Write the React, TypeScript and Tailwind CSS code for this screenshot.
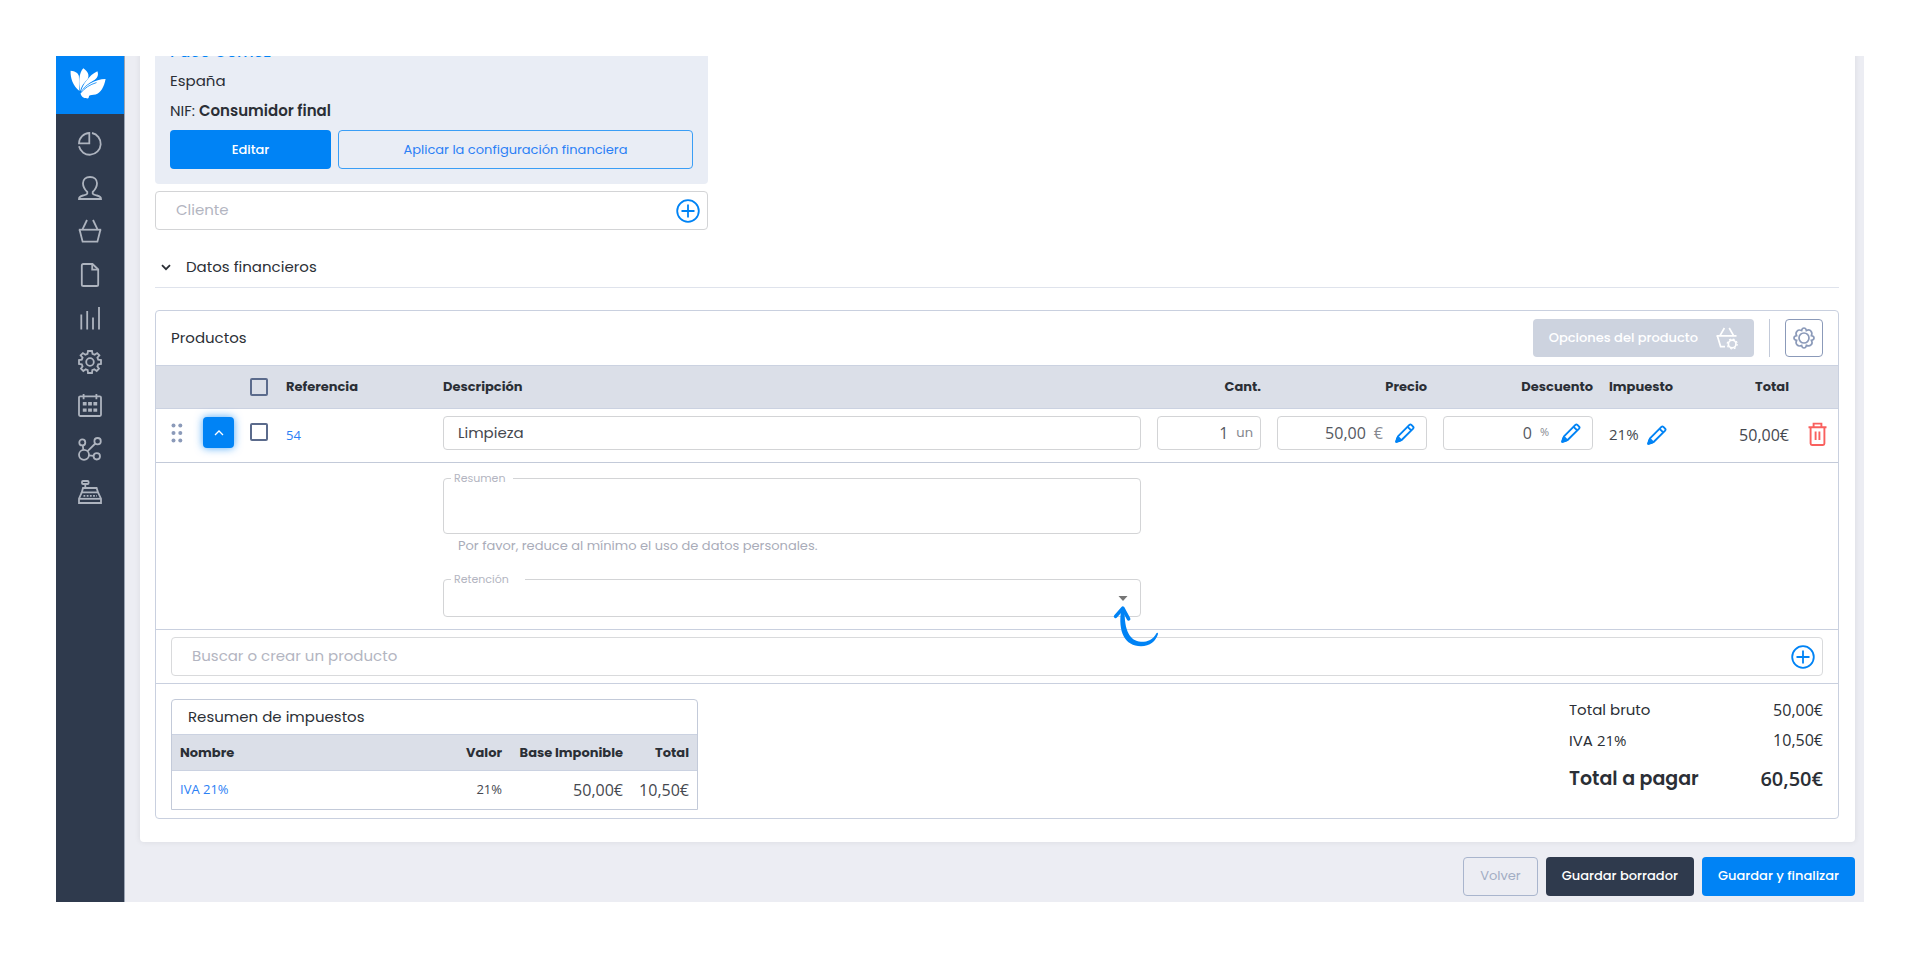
import { useState } from 'react';
import type { ReactNode } from 'react';
import clsx from 'clsx';

interface IconProps {
  className?: string;
}

interface NavItem {
  label: string;
  icon: ReactNode;
}

const navItems: NavItem[] = [
  {
    label: 'Panel',
    icon: (
      <>
        <path d="M11.3 1 V11.3 H1 A10.6 10.6 0 0 1 11.3 1 Z" />
        <path d="M14 1 A11 11 0 1 1 1 14.3" />
      </>
    ),
  },
  {
    label: 'Contactos',
    icon: (
      <path d="M9.3 16 C6.7 13.6 5 11 5 7.3 C5 3.4 7.8 1 12 1 C16.2 1 19 3.4 19 7.3 C19 11 17.3 13.6 14.7 16 C14.1 18.6 16 18.8 19 19.5 C22 20.2 23 21 23 23 H1 C1 21 2 20.2 5 19.5 C8 18.8 9.9 18.6 9.3 16 Z" />
    ),
  },
  {
    label: 'Ventas',
    icon: (
      <>
        <path d="M0.8 10.7 H23.2" />
        <path d="M1.6 10.7 L4.6 22.6 H19.4 L22.4 10.7" />
        <path d="M4.6 10.2 L9 1" />
        <path d="M19.4 10.2 L15 1" />
      </>
    ),
  },
  {
    label: 'Documentos',
    icon: (
      <>
        <path d="M14.5 1 H5.4 Q3.8 1 3.8 2.6 V21.4 Q3.8 23 5.4 23 H18.6 Q20.2 23 20.2 21.4 V6.5 Z" />
        <path d="M14.2 1.3 V6.6 H20" />
      </>
    ),
  },
  {
    label: 'Informes',
    icon: <path d="M3.3 8.5 V23.5 M9.2 5 V23.5 M15 11.5 V23.5 M21 1 V23.5" />,
  },
  {
    label: 'Ajustes',
    icon: (
      <>
        <circle cx="12" cy="12" r="3.8" />
        <path d="M10 1 H14 L14.5 3.9 L16.7 4.8 L19.1 3.1 L21.4 5.4 L19.4 7.7 L20.2 9.7 L23 10.1 V13.9 L20.2 14.3 L19.4 16.3 L21 18.7 L18.7 21 L16.3 19.2 L14.3 20.1 L14 23 H10 L9.7 20.1 L7.7 19.2 L5.3 21 L3 18.7 L4.6 16.3 L3.8 14.3 L1 13.9 V10.1 L3.8 9.7 L4.6 7.7 L2.6 5.4 L4.9 3.1 L7.3 4.8 L9.5 3.9 Z" />
      </>
    ),
  },
  {
    label: 'Calendario',
    icon: (
      <>
        <rect x="1" y="3.4" width="22" height="19.6" rx="1.2" />
        <path d="M5.6 1 V6.2 M18.4 1 V6.2" />
        <path
          d="M4.8 9 h3.8 v3.4 h-3.8 Z M10.1 9 h3.8 v3.4 h-3.8 Z M15.4 9 h3.8 v3.4 h-3.8 Z M4.8 15.4 h3.8 v3.4 h-3.8 Z M10.1 15.4 h3.8 v3.4 h-3.8 Z M15.4 15.4 h3.8 v3.4 h-3.8 Z"
          fill="currentColor"
          stroke="none"
        />
      </>
    ),
  },
  {
    label: 'Integraciones',
    icon: (
      <>
        <circle cx="6" cy="17.8" r="5" />
        <circle cx="4.3" cy="5.4" r="3" />
        <circle cx="19.6" cy="4.2" r="3.2" />
        <circle cx="18.8" cy="19.3" r="3.2" />
        <path d="M4.8 8.4 L5.3 12.8 M9.6 14.2 L17.3 6.5 M11 18.4 L15.6 18.9" />
      </>
    ),
  },
  {
    label: 'Caja',
    icon: (
      <>
        <rect x="4" y="1" width="6.6" height="3" rx="1" />
        <path d="M7.3 4 V8" />
        <path d="M5 8 H18.6 L20 12.4 H3.8 Z" />
        <path d="M3.8 12.4 L1 18.6 V23 H23 V18.6 L20 12.4" />
        <path d="M1 18.8 H23" />
        <path d="M5.5 15.8 H19" strokeDasharray="1.8 1.4" />
      </>
    ),
  },
];

const Logo = () => (
  <svg viewBox="0 0 36 31" className="h-[31px] w-9" fill="#fff" aria-hidden="true">
    <path d="M0.6 2.8 C5 3.2 8.2 5 8.9 8 C9.2 13 8.6 18 9.5 23 C3 18 0.2 10 0.6 2.8 Z" />
    <path d="M13.3 0.2 C18 3.2 19.4 7 17.9 10.6 C14.9 14.5 11.5 17.5 10.2 23 C8.5 14 8.7 5.4 13.3 0.2 Z" />
    <path d="M27.4 3.2 C29 7 27.2 10.4 23.6 12.6 C18.4 15.3 14 18.8 11 23.6 C12.4 17 19 7 27.4 3.2 Z" />
    <path d="M35.6 11 C34 19.4 30.8 24.6 25.6 26.5 C22.8 27.2 20.4 26.6 19.2 27.8 C18.6 28.8 19.2 29.8 18 30.4 C14 30.4 11 28.8 10.6 25.2 C14.5 17.2 25 11.2 35.6 11 Z" />
    <path d="M10.6 25 C15 19.6 20 16.6 26.5 14.6" stroke="#0083f5" strokeWidth="0.8" fill="none" />
  </svg>
);

const PlusIcon = () => (
  <svg viewBox="0 0 24 24" className="size-6" fill="none" stroke="#0083f5" strokeWidth="1.8" aria-hidden="true">
    <circle cx="12" cy="12" r="10.8" />
    <path d="M12 5.5 V18.5 M5.5 12 H18.5" />
  </svg>
);

const PencilIcon = ({ className }: IconProps) => (
  <svg
    viewBox="0 0 20 20"
    className={clsx('size-5', className)}
    fill="none"
    stroke="#0083f5"
    strokeWidth="1.9"
    strokeLinejoin="round"
    aria-hidden="true"
  >
    <path d="M1.2 18.8 L3 13.4 L14.4 1.9 Q15.4 1 16.4 1.9 L18.1 3.6 Q19 4.6 18.1 5.6 L6.6 17 Z" />
    <path d="M12.6 3.8 L16.2 7.4 M3.2 14.2 L5.8 16.8" />
    <path d="M1.2 18.8 L2.2 15.2 L4.8 17.8 Z" fill="#0083f5" />
  </svg>
);

const TrashIcon = () => (
  <svg viewBox="0 0 19 24" className="h-6 w-[19px]" fill="none" stroke="#f9605e" strokeWidth="1.9" aria-hidden="true">
    <path d="M0.5 5.2 H18.5 M5.6 5 V1.6 H13.4 V5" />
    <path d="M2.6 5.4 V21.6 Q2.6 23 4 23 H15 Q16.4 23 16.4 21.6 V5.4" />
    <path d="M7.6 9.5 V18 M11.4 9.5 V18" />
  </svg>
);

const BasketGearIcon = () => (
  <svg viewBox="0 0 22 23" className="h-[23px] w-[22px]" fill="none" stroke="#fff" strokeWidth="1.7" aria-hidden="true">
    <path d="M0.5 8.8 H20.5 M4 8.6 L8.4 1 M17.6 8.6 L13.2 1" />
    <path d="M1.4 9 L4.6 19.6 H9" />
    <circle cx="16.2" cy="17" r="3.8" />
    <circle cx="16.2" cy="17" r="5" strokeWidth="1.2" strokeDasharray="1.9 2.03" />
  </svg>
);

const GearIcon = () => (
  <svg viewBox="0 0 22 22" className="size-[22px]" fill="none" stroke="#8b9ab9" strokeWidth="1.7" aria-hidden="true">
    <circle cx="11" cy="11" r="5" />
    <path d="M11 1 Q12.8 1 13.4 3.6 Q16.4 1.9 17.9 4.1 Q19.6 5.8 18.4 8.6 Q21 9.2 21 11 Q21 12.8 18.4 13.4 Q20 16.2 18 17.9 Q16.2 19.6 13.4 18.4 Q12.8 21 11 21 Q9.2 21 8.6 18.4 Q5.8 19.8 4.1 17.9 Q2.3 16.2 3.6 13.4 Q1 12.8 1 11 Q1 9.2 3.6 8.6 Q2.2 5.8 4.1 4.1 Q5.8 2.2 8.6 3.6 Q9.2 1 11 1 Z" />
  </svg>
);

const DragIcon = () => (
  <svg viewBox="0 0 12 20" className="h-5 w-3" fill="#8b9ab9" aria-hidden="true">
    <circle cx="2.5" cy="2.4" r="2" />
    <circle cx="9.3" cy="2.4" r="2" />
    <circle cx="2.5" cy="10" r="2" />
    <circle cx="9.3" cy="10" r="2" />
    <circle cx="2.5" cy="17.6" r="2" />
    <circle cx="9.3" cy="17.6" r="2" />
  </svg>
);

// Curved pointer that calls attention to the withholding drop-down
const PointerArrow = () => (
  <svg
    viewBox="0 0 48 44"
    className="pointer-events-none absolute -right-[19px] top-[25px] z-10 h-11 w-12"
    aria-hidden="true"
  >
    <path d="M9.3 5 C5.5 28 13 42.2 29 42.2 C38 42.2 44 37 46 30 Q46 28 44.6 29 C41 36 35 38 29 37.8 C18 37 12 27 12.7 5 Z" fill="#0083f5" />
    <path d="M3.6 12.4 L10.8 4.2 L16.6 14.8" fill="none" stroke="#0083f5" strokeWidth="3.6" strokeLinecap="round" strokeLinejoin="round" />
  </svg>
);

const Sidebar = () => (
  <aside className="w-[69px] shrink-0 border-r border-[#9ba4b3] bg-[#2f3a4d]">
    <a href="#inicio" aria-label="Inicio" className="flex h-[58px] items-center justify-center bg-[#0083f5] pr-1 pb-1">
      <Logo />
    </a>
    <nav className="mt-[18px] flex h-[372px] flex-col items-center justify-between">
      {navItems.map((item) => (
        <a key={item.label} href="#menu" aria-label={item.label} className="text-[#aeb4bf]">
          <svg viewBox="0 0 24 24" className="size-6" fill="none" stroke="currentColor" strokeWidth="1.8" aria-hidden="true">
            {item.icon}
          </svg>
        </a>
      ))}
    </nav>
  </aside>
);

// The page is scrolled down, so the client name is only just visible
const ClientSection = () => (
  <div className="w-[553px]">
    <div className="-mt-[18px] rounded-b bg-[#e9edf5] px-[15px] pb-[15px]">
      <a href="#cliente" className="block text-base leading-7 font-medium text-[#0083f5]">
        Paco Gómez
      </a>
      <p className="leading-[30px]">España</p>
      <p className="leading-[30px]">
        NIF: <strong className="font-semibold">Consumidor final</strong>
      </p>
      <div className="mt-1 flex gap-[7px]">
        <button type="button" className="h-[39px] w-[161px] rounded bg-[#0083f5] text-[13px] font-medium text-white">
          Editar
        </button>
        <button type="button" className="h-[39px] flex-1 rounded border border-[#3a9ef6] text-[13px] text-[#2b80f5]">
          Aplicar la configuración financiera
        </button>
      </div>
    </div>
    <div className="mt-[7px] flex h-[39px] items-center rounded border border-[#d3d4d6] pr-[7px] pl-5">
      <input
        type="text"
        aria-label="Cliente"
        placeholder="Cliente"
        className="min-w-0 flex-1 outline-none placeholder:text-[#b3b5c1]"
      />
      <button type="button" aria-label="Añadir cliente">
        <PlusIcon />
      </button>
    </div>
  </div>
);

const inputBox = 'flex h-[34px] items-center rounded border border-[#d3d4d6] bg-white';
const numberFont = "font-['Open_Sans','Noto_Sans',sans-serif]";
const checkbox = 'block size-[18px] appearance-none rounded-xs border-2 border-[#5b6b8c]';

const ProductsTable = () => {
  const [isExpanded, setIsExpanded] = useState(true);

  return (
    <table className="w-full table-fixed text-left">
      <colgroup>
        <col className="w-[86px]" />
        <col className="w-9" />
        <col className="w-[157px]" />
        <col />
        <col className="w-[120px]" />
        <col className="w-[166px]" />
        <col className="w-[166px]" />
        <col className="w-[100px]" />
        <col className="w-24" />
        <col className="w-[41px]" />
      </colgroup>
      <thead>
        <tr className="h-[43px] border-y border-[#cbd2e1] bg-[#dbdfe8] text-[13px]">
          <td></td>
          <td className="px-2">
            <input type="checkbox" aria-label="Seleccionar todo" className={checkbox} />
          </td>
          <th className="px-2 font-bold">Referencia</th>
          <th className="px-2 font-bold">Descripción</th>
          <th className="px-2 text-right font-bold">Cant.</th>
          <th className="px-2 text-right font-bold">Precio</th>
          <th className="px-2 text-right font-bold">Descuento</th>
          <th className="px-2 font-bold">Impuesto</th>
          <th className="px-2 text-right font-bold">Total</th>
          <td></td>
        </tr>
      </thead>
      <tbody>
        <tr className="h-[54px]">
          <td className="pb-1.5">
            <div className="flex items-center justify-between pr-2 pl-[15px]">
              <DragIcon />
              <button
                type="button"
                aria-label="Mostrar detalle"
                aria-expanded={isExpanded}
                onClick={() => setIsExpanded(!isExpanded)}
                className="flex size-[31px] items-center justify-center rounded bg-[#0083f5] shadow-[0_0_8px_#0083f5]/70"
              >
                <svg viewBox="0 0 10 6" className="h-1.5 w-2.5" fill="none" stroke="#fff" strokeWidth="1.3" aria-hidden="true">
                  <path d="M1 5 L5 1 L9 5" />
                </svg>
              </button>
            </div>
          </td>
          <td className="px-2 pb-2">
            <input type="checkbox" aria-label="Seleccionar producto 54" className={checkbox} />
          </td>
          <td className={clsx('px-2 text-[13px] text-[#2b80f5]', numberFont)}>
            <a href="#producto">54</a>
          </td>
          <td className="px-2 pb-1.5">
            <input
              type="text"
              aria-label="Descripción"
              defaultValue="Limpieza"
              className="block h-[34px] w-full rounded border border-[#d3d4d6] px-3.5 text-[#45484f] outline-none"
            />
          </td>
          <td className="px-2 pb-1.5">
            <label className={clsx(inputBox, 'gap-2 pr-[7px]')}>
              <input
                type="text"
                aria-label="Cantidad"
                defaultValue="1"
                className={clsx('min-w-0 flex-1 text-right text-base text-[#55585f] outline-none', numberFont)}
              />
              <span className="text-[13px] text-[#85888f]">un</span>
            </label>
          </td>
          <td className="px-2 pb-1.5">
            <div className={clsx(inputBox, 'pr-[11px]')}>
              <input
                type="text"
                aria-label="Precio"
                defaultValue="50,00"
                className={clsx('min-w-0 flex-1 text-right text-base text-[#55585f] outline-none', numberFont)}
              />
              <span className={clsx('ml-2 text-base text-[#85888f]', numberFont)}>€</span>
              <button type="button" aria-label="Editar precio" className="ml-3">
                <PencilIcon />
              </button>
            </div>
          </td>
          <td className="px-2 pb-1.5">
            <div className={clsx(inputBox, 'pr-[11px]')}>
              <input
                type="text"
                aria-label="Descuento"
                defaultValue="0"
                className={clsx('min-w-0 flex-1 text-right text-base text-[#55585f] outline-none', numberFont)}
              />
              <span className={clsx('ml-2 text-[11px] text-[#85888f]', numberFont)}>%</span>
              <button type="button" aria-label="Editar descuento" className="ml-3">
                <PencilIcon />
              </button>
            </div>
          </td>
          <td className="px-2 pb-0.5">
            <div className="flex items-center gap-2">
              <span className={clsx('text-[15px] text-[#45484f]', numberFont)}>21%</span>
              <button type="button" aria-label="Editar impuesto">
                <PencilIcon />
              </button>
            </div>
          </td>
          <td className={clsx('px-2 pb-0.5 text-right text-base text-[#45484f]', numberFont)}>50,00€</td>
          <td className="pb-1 pl-[11px]">
            <button type="button" aria-label="Eliminar producto" className="block">
              <TrashIcon />
            </button>
          </td>
        </tr>
        {isExpanded && (
          <tr className="border-t border-[#c3cad9]">
            <td colSpan={3}></td>
            <td className="px-2 pt-[15px] pb-3">
              <div className="relative">
                <label htmlFor="resumen" className="absolute -top-2 left-2 bg-white pr-2 pl-[3px] text-[11px] leading-4 text-[#b3b5c1]">
                  Resumen
                </label>
                <textarea
                  id="resumen"
                  className="block h-14 w-full resize-none rounded border border-[#d3d4d6] px-3.5 py-2 outline-none"
                />
              </div>
              <p className="px-[15px] text-[13px] leading-6 text-[#a9acb9]">
                Por favor, reduce al mínimo el uso de datos personales.
              </p>
              <div className="relative mt-[21px]">
                <label htmlFor="retencion" className="absolute -top-2 left-2 bg-white pr-4 pl-[3px] text-[11px] leading-4 text-[#b3b5c1]">
                  Retención
                </label>
                <select
                  id="retencion"
                  defaultValue=""
                  className="block h-[38px] w-full appearance-none rounded border border-[#d3d4d6] bg-white px-3.5 outline-none"
                >
                  <option value=""></option>
                </select>
                <svg
                  viewBox="0 0 10 5"
                  className="pointer-events-none absolute top-[17px] right-[13px] h-[5px] w-2.5"
                  fill="#757575"
                  aria-hidden="true"
                >
                  <path d="M0.5 0 H9.5 L5 5 Z" />
                </svg>
                <PointerArrow />
              </div>
            </td>
            <td colSpan={6}></td>
          </tr>
        )}
      </tbody>
    </table>
  );
};

const TaxSummary = () => (
  <div className="w-[527px] rounded-t border border-[#c3cad9]">
    <h3 className="px-4 leading-[34px]">Resumen de impuestos</h3>
    <table className="w-full text-right">
      <thead>
        <tr className="h-9 border-y border-[#cbd2e1] bg-[#dbdfe8] text-[13px]">
          <th className="px-2 text-left font-bold">Nombre</th>
          <th className="w-[68px] px-2 font-bold">Valor</th>
          <th className="w-[121px] px-2 font-bold whitespace-nowrap">Base Imponible</th>
          <th className="w-[66px] px-2 font-bold">Total</th>
        </tr>
      </thead>
      <tbody>
        <tr className={clsx('h-[38px] text-base text-[#45484f]', numberFont)}>
          <td className="px-2 text-left text-[13px] text-[#2b80f5]">
            <a href="#iva">IVA 21%</a>
          </td>
          <td className="px-2 text-[13px]">21%</td>
          <td className="px-2">50,00€</td>
          <td className="px-2">10,50€</td>
        </tr>
      </tbody>
    </table>
  </div>
);

const Totals = () => (
  <dl className="-mt-1 grid w-[254px] grid-cols-[1fr_auto] content-start leading-[30px]">
    <dt>Total bruto</dt>
    <dd className={clsx('text-right text-base leading-[30px]', numberFont)}>50,00€</dd>
    <dt>
      IVA <span className={numberFont}>21%</span>
    </dt>
    <dd className={clsx('text-right text-base leading-[30px]', numberFont)}>10,50€</dd>
    <dt className="pt-2 text-[19px] leading-[30px] font-semibold">Total a pagar</dt>
    <dd className={clsx('pt-2 text-right text-xl leading-[30px] font-semibold', numberFont)}>60,50€</dd>
  </dl>
);

const ProductsSection = () => (
  <section className="mt-[22px] rounded border border-[#c9d0df]">
    <div className="flex h-[54px] items-center px-[15px]">
      <h2 className="flex-1">Productos</h2>
      <button
        type="button"
        disabled
        className="flex h-[38px] items-center gap-[18px] rounded bg-[#cdd3df] px-4 text-[13px] font-medium text-white"
      >
        Opciones del producto
        <BasketGearIcon />
      </button>
      <span className="mx-[15px] h-[38px] w-px bg-[#c3cad9]"></span>
      <button
        type="button"
        aria-label="Configurar columnas"
        className="flex size-[38px] items-center justify-center rounded border border-[#8b9ab9]"
      >
        <GearIcon />
      </button>
    </div>

    <ProductsTable />

    <div className="border-y border-[#c9d0df] px-[15px] py-[7px]">
      <div className="flex h-[39px] items-center rounded border border-[#d9dadc] pr-[7px] pl-5">
        <input
          type="text"
          aria-label="Buscar o crear un producto"
          placeholder="Buscar o crear un producto"
          className="min-w-0 flex-1 outline-none placeholder:text-[#b3b5c1]"
        />
        <button type="button" aria-label="Crear producto">
          <PlusIcon />
        </button>
      </div>
    </div>

    <div className="flex justify-between px-[15px] pt-[15px] pb-2">
      <TaxSummary />
      <Totals />
    </div>
  </section>
);

const App = () => {
  return (
    <div className="min-h-screen bg-white p-14 font-['Poppins','Inter',sans-serif] text-[15px] text-[#2b2f36]">
      <div className="flex overflow-hidden bg-[#ecedf3]">
        <Sidebar />
        <div className="min-w-0 flex-1 pr-[9px] pl-[15px]">
          <main className="rounded-b bg-white pr-4 pb-[23px] pl-[15px] shadow-[0_0_6px_#00000014]">
            <ClientSection />
            <button type="button" className="mt-[18px] flex h-10 w-full items-center gap-[15px] border-b border-[#dfe3ec] pl-1.5 text-left">
              <svg viewBox="0 0 10 7" className="h-[7px] w-2.5" fill="none" stroke="currentColor" strokeWidth="1.8" aria-hidden="true">
                <path d="M1 1.2 L5 5.2 L9 1.2" />
              </svg>
              Datos financieros
            </button>
            <ProductsSection />
          </main>
          <footer className="flex justify-end gap-2 pt-[15px] pb-1.5">
            <button type="button" className="h-[39px] rounded border border-[#a9b5cd] px-4 text-[13px] text-[#a3aec4]">
              Volver
            </button>
            <button type="button" className="h-[39px] rounded bg-[#2f3a4d] px-4 text-[13px] font-medium text-white">
              Guardar borrador
            </button>
            <button type="button" className="h-[39px] rounded bg-[#0083f5] px-4 text-[13px] font-medium text-white">
              Guardar y finalizar
            </button>
          </footer>
        </div>
      </div>
    </div>
  );
};

export default App;
